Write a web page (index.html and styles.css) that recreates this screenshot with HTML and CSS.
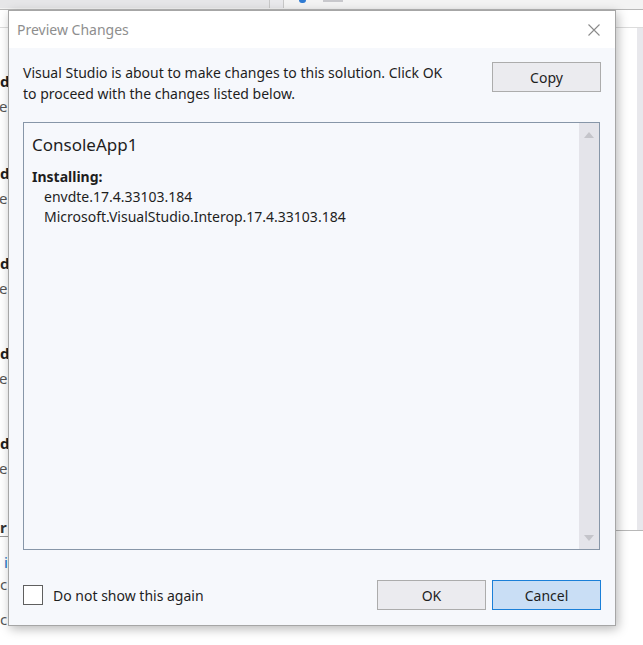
FILE: index.html
```html
<!DOCTYPE html>
<html>
<head>
<meta charset="utf-8">
<link rel="stylesheet" href="styles.css">
</head>
<body>
<div class="page">
  <div class="toolbar">
    <div class="tb-search"></div>
    <div class="tb-drop"></div>
    <div class="tb-icon"></div>
    <div class="tb-rect"></div>
  </div>
  <div class="content">
    <div class="left-list">
      <div class="item"><div class="it-title">d</div><div class="it-sub">er</div></div>
      <div class="item"><div class="it-title">d</div><div class="it-sub">er</div></div>
      <div class="item"><div class="it-title">d</div><div class="it-sub">er</div></div>
      <div class="item"><div class="it-title">d</div><div class="it-sub">er</div></div>
      <div class="item"><div class="it-title">d</div><div class="it-sub">er</div></div>
      <div class="section">r</div>
      <div class="link">i</div>
      <div class="plain">c</div>
      <div class="plain">c</div>
    </div>
    <div class="right-panel"><div class="rp-scroll"></div></div>
  </div>
</div>

<div class="dialog">
  <div class="titlebar">
    <span class="title">Preview Changes</span>
    <svg class="close" width="12" height="12" viewBox="0 0 12 12"><path d="M0.5 0.5 L11.5 11.5 M11.5 0.5 L0.5 11.5" stroke="#8a8a8a" stroke-width="1.1" fill="none"/></svg>
  </div>
  <div class="body">
    <div class="top-row">
      <p class="intro">Visual Studio is about to make changes to this solution. Click OK to proceed with the changes listed below.</p>
      <button class="btn">Copy</button>
    </div>
    <div class="listbox">
      <div class="list-content">
        <div class="project">ConsoleApp1</div>
        <div class="action">Installing:</div>
        <div class="pkg">envdte.17.4.33103.184</div>
        <div class="pkg">Microsoft.VisualStudio.Interop.17.4.33103.184</div>
      </div>
      <div class="scrollbar">
        <svg width="10" height="6" viewBox="0 0 10 6"><path d="M0 6 L5 0 L10 6 Z" fill="#c4c4ca"/></svg>
        <svg width="10" height="6" viewBox="0 0 10 6"><path d="M0 0 L10 0 L5 6 Z" fill="#c4c4ca"/></svg>
      </div>
    </div>
    <div class="bottom-row">
      <label class="check"><span class="box"></span><span>Do not show this again</span></label>
      <div class="actions">
        <button class="btn">OK</button>
        <button class="btn primary">Cancel</button>
      </div>
    </div>
  </div>
</div>
</body>
</html>
```
FILE: styles.css
```css
* { box-sizing: border-box; }
html, body { margin: 0; padding: 0; }
body {
  width: 643px;
  height: 645px;
  overflow: hidden;
  background: #ffffff;
  font-family: "Noto Sans", "Open Sans", sans-serif;
  color: #1e1e1e;
  position: relative;
}
.page { width: 643px; height: 645px; display: flex; flex-direction: column; }
.toolbar {
  height: 10px;
  background: #f3f3f3;
  border-bottom: 1px solid #b8b8b8;
  display: flex;
  align-items: flex-start;
}
.tb-search { width: 270px; height: 8px; background: #e6e6e8; border-right: 1px solid #c8c8c8; }
.tb-drop { width: 14px; height: 8px; background: #e9e9ec; border-right: 1px solid #c8c8c8; }
.tb-icon { width: 7px; height: 3px; margin-left: 15px; background: #2f7bd3; border-radius: 0 0 4px 4px; }
.tb-rect { width: 20px; height: 2px; margin-left: 17px; background: #c8c8cc; }
.content {
  flex: 1;
  display: flex;
  margin-top: 17px;
  border-top: 1px solid #dcdcdc;
}
.left-list { width: 200px; padding-top: 42px; font-size: 15px; }
.item { height: 90px; }
.item:first-child { height: 92px; }
.it-title { font-weight: bold; color: #1e1e1e; line-height: 22px; }
.it-sub { color: #555; line-height: 22px; margin-top: 3px; margin-left: -1px; }
.section { font-weight: bold; border-bottom: 1px solid #999; width: 60px; line-height: 18px; margin-top: -4px; color: #333; }
.link { color: #1a6fc4; margin-top: 14px; line-height: 22px; padding-left: 4px; }
.plain { color: #555; line-height: 22px; margin-top: 0; }
.plain + .plain { margin-top: 13px; }
.right-panel {
  margin-left: auto;
  width: 30px;
  height: 503px;
  border-bottom: 1px solid #b8b8b8;
  display: flex;
  justify-content: flex-end;
}
.rp-scroll { width: 6px; background: #e8e8ec; }

.dialog {
  position: absolute;
  left: 8px;
  top: 10px;
  width: 608px;
  height: 616px;
  border: 1px solid #a6a6a6;
  background: #f6f8fc;
  box-shadow: 2px 3px 10px rgba(0,0,0,0.28);
  display: flex;
  flex-direction: column;
}
.titlebar {
  height: 37px;
  background: #ffffff;
  display: flex;
  align-items: center;
  justify-content: space-between;
  padding: 0 15px 1px 8px;
}
.title { font-size: 14px; color: #8e8e8e; }
.close { margin-top: 2px; }
.body {
  flex: 1;
  display: flex;
  flex-direction: column;
  padding: 14px 14px 15px 14px;
}
.top-row { display: flex; justify-content: space-between; align-items: flex-start; }
.intro { margin: 0; width: 428px; font-size: 14px; line-height: 21px; }
.btn {
  width: 109px;
  height: 30px;
  border: 1px solid #acacac;
  background: #ebebef;
  font-family: inherit;
  font-size: 14px;
  color: #1e1e1e;
  padding: 0;
}
.btn.primary { background: #c9def5; border-color: #1a7fd8; }
.listbox {
  margin-top: 18px;
  height: 428px;
  border: 1px solid #8796a8;
  background: #f6f8fc;
  display: flex;
  width: 577px;
}
.list-content { flex: 1; padding: 9px 8px; }
.project { font-size: 17px; line-height: 26px; }
.action { font-weight: bold; font-size: 14px; line-height: 20px; margin-top: 9px; }
.pkg { font-size: 14px; line-height: 19.5px; padding-left: 12px; }
.scrollbar {
  width: 20px;
  background: #e4e4ea;
  display: flex;
  flex-direction: column;
  justify-content: space-between;
  align-items: center;
  padding: 9px 0 8px;
}
.bottom-row {
  margin-top: auto;
  display: flex;
  justify-content: space-between;
  align-items: center;
}
.check { display: flex; align-items: center; gap: 10px; font-size: 14px; }
.box { width: 20px; height: 20px; border: 1px solid #5f5f5f; background: #ffffff; }
.actions { display: flex; gap: 6px; }
```
